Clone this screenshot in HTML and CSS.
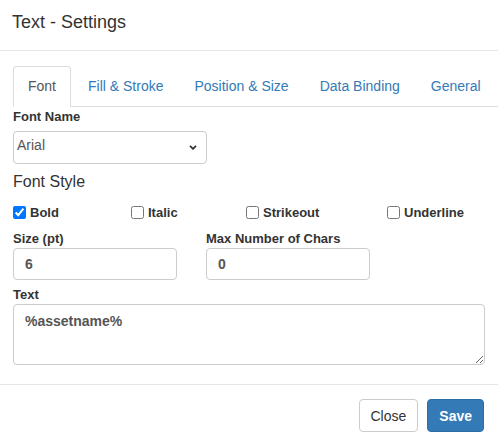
FILE: index.html
```html
<!DOCTYPE html>
<html lang="en">
<head>
<meta charset="utf-8">
<title>Text - Settings</title>
<link rel="stylesheet" href="styles.css">
</head>
<body>
<div class="modal">
  <div class="modal-header">
    <h4 class="modal-title">Text - Settings</h4>
  </div>
  <div class="modal-body">
    <ul class="tabs">
      <li class="tab active">Font</li>
      <li class="tab">Fill &amp; Stroke</li>
      <li class="tab">Position &amp; Size</li>
      <li class="tab">Data Binding</li>
      <li class="tab">General</li>
    </ul>
    <label class="lbl lbl-fontname">Font Name</label>
    <div class="select">
      <span class="select-value">Arial</span>
      <svg class="chevron" width="8" height="5" viewBox="0 0 8 5"><polyline points="1,0.8 4,3.8 7,0.8" fill="none" stroke="#333" stroke-width="1.8"/></svg>
    </div>
    <div class="section-title">Font Style</div>
    <div class="checks">
      <label class="check"><input type="checkbox" checked><span>Bold</span></label>
      <label class="check"><input type="checkbox"><span>Italic</span></label>
      <label class="check"><input type="checkbox"><span>Strikeout</span></label>
      <label class="check"><input type="checkbox"><span>Underline</span></label>
    </div>
    <div class="pair">
      <div class="field">
        <label class="lbl lbl-small">Size (pt)</label>
        <input class="input" type="text" value="6">
      </div>
      <div class="field">
        <label class="lbl lbl-small">Max Number of Chars</label>
        <input class="input" type="text" value="0">
      </div>
    </div>
    <label class="lbl lbl-text">Text</label>
    <textarea class="textarea">%assetname%</textarea>
  </div>
  <div class="modal-footer">
    <button class="btn btn-default">Close</button>
    <button class="btn btn-primary">Save</button>
  </div>
</div>
</body>
</html>
```

FILE: styles.css
```css
* { box-sizing: border-box; }
html, body { margin: 0; padding: 0; background: #fff; }
body {
  font-family: "Liberation Sans", Arial, sans-serif;
  font-size: 14px;
  color: #333;
  overflow: hidden;
}
.modal { width: 498px; overflow: hidden; }
.modal-header {
  padding: 12px 12px 18px;
  border-bottom: 1px solid #e5e5e5;
}
.modal-title {
  margin: 0;
  font-size: 18px;
  line-height: 20px;
  font-weight: normal;
  color: #333;
}
.modal-body {
  padding: 15px 13px 19px;
}
.tabs {
  list-style: none;
  margin: 0 -40px 0 0;
  padding: 0;
  display: flex;
  border-bottom: 1px solid #ddd;
  height: 41px;
}
.tab {
  flex: 0 0 auto;
  white-space: nowrap;
  padding: 9px 14px 10px;
  line-height: 20px;
  font-size: 14px;
  color: #337ab7;
  border: 1px solid transparent;
  border-radius: 4px 4px 0 0;
  margin-right: 1px;
  margin-bottom: -1px;
  height: 41px;
}
.tab.active {
  color: #555;
  background: #fff;
  border-color: #ddd #ddd transparent;
  margin-right: 2px;
}
.lbl {
  display: block;
  font-weight: bold;
  font-size: 13px;
  line-height: 17px;
  color: #333;
}
.lbl-fontname { margin: 1px 0 6px; }
.select {
  width: 194px;
  height: 33px;
  border: 1px solid #ccc;
  border-radius: 4px;
  display: flex;
  justify-content: space-between;
  align-items: flex-start;
  padding: 3px 9px 0 3px;
  line-height: 20px;
  color: #555;
  font-size: 14px;
}
.chevron { margin-top: 10px; }
.section-title {
  margin-top: 8px;
  font-size: 16px;
  line-height: 20px;
  color: #333;
}
.checks {
  margin-top: 12px;
  display: grid;
  grid-template-columns: 118px 115px 141px auto;
  height: 17px;
}
.check {
  display: flex;
  align-items: center;
  font-weight: bold;
  font-size: 13px;
  line-height: 17px;
  color: #333;
}
.check input {
  margin: 0 4px 0 0;
  width: 13px;
  height: 13px;
}
.pair {
  margin-top: 9px;
  display: grid;
  grid-template-columns: 164px 164px;
  column-gap: 29px;
}
.lbl-small { margin-bottom: 1px; }
.input {
  display: block;
  width: 164px;
  height: 32px;
  border: 1px solid #ccc;
  border-radius: 4px;
  padding: 5px 11px;
  font-family: "Liberation Sans", Arial, sans-serif;
  font-size: 14px;
  font-weight: bold;
  line-height: 20px;
  color: #555;
  outline: none;
}
.lbl-text { margin: 6px 0 1px; }
.textarea {
  display: block;
  width: 472px;
  height: 61px;
  border: 1px solid #ccc;
  border-radius: 4px;
  padding: 6px 11px;
  font-family: "Liberation Sans", Arial, sans-serif;
  font-size: 14px;
  font-weight: bold;
  line-height: 20px;
  color: #555;
  resize: both;
  outline: none;
}
.modal-footer {
  border-top: 1px solid #e5e5e5;
  padding: 14px 14px 13px;
  display: flex;
  justify-content: flex-end;
  gap: 9px;
}
.btn {
  height: 33px;
  padding: 0 11px;
  font-family: "Liberation Sans", Arial, sans-serif;
  font-size: 14px;
  line-height: 20px;
  border-radius: 4px;
  border: 1px solid #ccc;
  cursor: pointer;
}
.btn-default { background: #fff; color: #333; }
.btn-primary {
  background: #337ab7;
  border-color: #2e6da4;
  color: #fff;
  font-weight: bold;
}
```
